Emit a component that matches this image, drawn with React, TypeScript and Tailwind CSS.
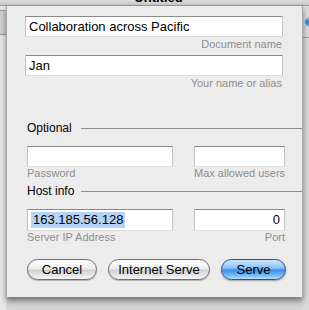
import React from "react";

const font = { fontFamily: '"Liberation Sans", Arial, sans-serif' };

function Field({ w, h = 21, children, right = false }: { w: number; h?: number; children?: React.ReactNode; right?: boolean }) {
  return (
    <div
      className={`bg-white border border-t-[#8a8a8a] border-x-[#c2c2c2] border-b-[#dedede] flex items-center text-[13px] text-black ${right ? "justify-end pr-[4px]" : "pl-[3px]"}`}
      style={{ width: w, height: h }}
    >
      {children}
    </div>
  );
}

function Section({ title }: { title: string }) {
  return (
    <div className="flex items-center h-[15px] ml-[20px]">
      <div className="w-[54px] text-[12px] text-black leading-[15px]">{title}</div>
      <div className="flex-1 h-px bg-[#8c8c8c]" />
    </div>
  );
}

export default function App() {
  return (
    <div className="w-[309px] h-[310px] overflow-hidden bg-[#d6d6d6] flex flex-col" style={font}>
      {/* title bar remnant */}
      <div className="h-[6px] overflow-hidden flex justify-center bg-[linear-gradient(#dcdcdc,#c8c8c8)] border-b border-[#9a9a9a]">
        <div className="text-[13px] font-bold leading-[15px] mt-[-10px] text-black pl-[8px]">Untitled</div>
      </div>
      <div className="flex flex-1">
        {/* left window strip */}
        <div className="w-[6px] flex flex-col bg-[#e4e4e4]">
          <div className="h-[4px]" />
          <div className="h-px bg-[#9c9c9c]" />
          <div className="h-[23px] bg-[#d0d0d0]" />
          <div className="h-px bg-[#9c9c9c]" />
          <div className="flex-1 bg-[#e8e8e8]" />
        </div>
        {/* sheet */}
        <div className="w-[297px] h-[291px] bg-[#ececec] border-x border-[#a8a8a8] shadow-[0_4px_6px_rgba(0,0,0,0.45)] flex flex-col pt-[10px] relative z-10">
          <div className="ml-[18px]">
            <Field w={258}>Collaboration across Pacific</Field>
            <div className="w-[258px] mt-[1px] h-[13px] text-right pr-[1px] text-[11px] leading-[13px] text-[#8e8e8e]">Document name</div>
            <div className="mt-[4px]">
              <Field w={258}>Jan</Field>
            </div>
            <div className="w-[258px] mt-[1px] h-[13px] text-right pr-[1px] text-[11px] leading-[13px] text-[#8e8e8e]">Your name or alias</div>
          </div>

          <div className="mt-[31px]">
            <Section title="Optional" />
          </div>
          <div className="mt-[10px] ml-[20px] flex gap-[21px]">
            <div>
              <Field w={146} />
              <div className="h-[13px] text-[11px] leading-[13px] text-[#8e8e8e]">Password</div>
            </div>
            <div>
              <Field w={91} />
              <div className="h-[13px] text-[11px] leading-[13px] text-[#8e8e8e] text-right">Max allowed users</div>
            </div>
          </div>

          <div className="mt-[4px]">
            <Section title="Host info" />
          </div>
          <div className="mt-[10px] ml-[20px] flex gap-[21px]">
            <div>
              <Field w={146} h={22}>
                <span className="bg-[#b4d3f7] px-[2px] leading-[16px]">163.185.56.128</span>
              </Field>
              <div className="h-[13px] text-[11px] leading-[13px] text-[#8e8e8e]">Server IP Address</div>
            </div>
            <div>
              <Field w={91} h={22} right>0</Field>
              <div className="h-[13px] text-[11px] leading-[13px] text-[#8e8e8e] text-right">Port</div>
            </div>
          </div>

          <div className="mt-[15px] ml-[20px] flex gap-[11px]">
            <button className="w-[70px] h-[21px] rounded-full border border-[#6e6e6e] bg-[linear-gradient(#ffffff_0%,#ededed_45%,#d2d2d2_55%,#f4f4f4_100%)] text-[13px] leading-[19px] text-black shadow-[0_1px_1px_rgba(0,0,0,0.25)]">
              Cancel
            </button>
            <button className="w-[102px] h-[21px] rounded-full border border-[#6e6e6e] bg-[linear-gradient(#ffffff_0%,#ededed_45%,#d2d2d2_55%,#f4f4f4_100%)] text-[13px] leading-[19px] text-black shadow-[0_1px_1px_rgba(0,0,0,0.25)]">
              Internet Serve
            </button>
            <button className="w-[65px] h-[21px] rounded-full border border-[#2f4f8a] bg-[linear-gradient(#d0e8ff_0%,#8cc3f5_40%,#3d8ee8_55%,#7cc4ff_85%,#b8e2ff_100%)] text-[13px] leading-[19px] text-black shadow-[0_1px_2px_rgba(0,0,0,0.35)]">
              Serve
            </button>
          </div>
        </div>
        {/* right window strip */}
        <div className="w-[6px] flex flex-col bg-[#dadada]">
          <div className="h-[11px]" />
          <div className="ml-[2px] w-[6px] h-[10px] rounded-l-full bg-[linear-gradient(#9cc8f4,#2f7fe0,#7cc0ff)]" />
          <div className="h-[10px]" />
          <div className="h-px bg-[#9c9c9c]" />
          <div className="flex-1" />
        </div>
      </div>
    </div>
  );
}
